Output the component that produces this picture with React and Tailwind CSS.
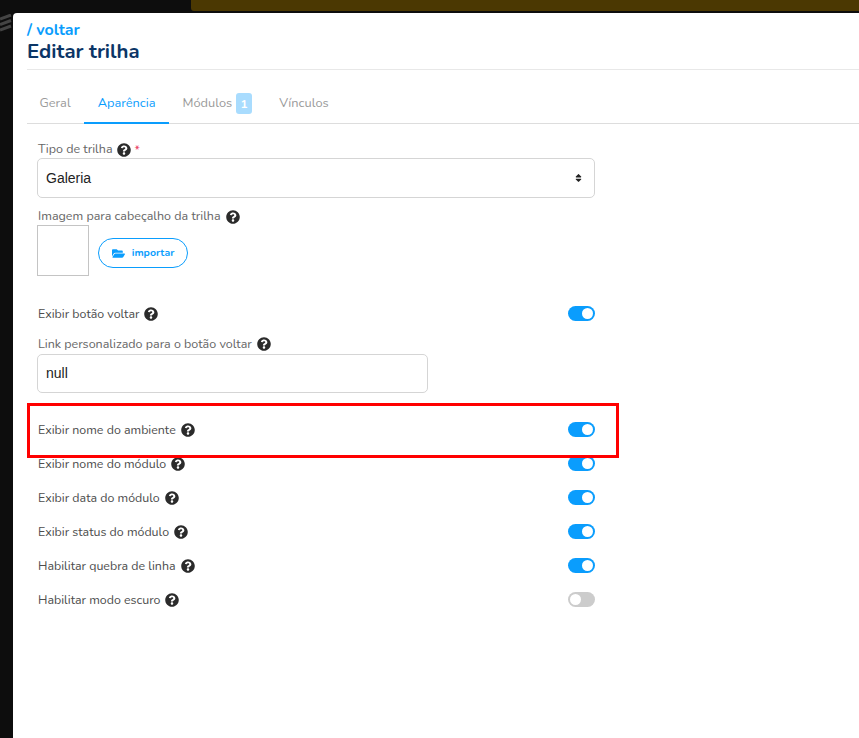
import { FaQuestionCircle, FaFolderOpen, FaSort } from 'react-icons/fa'

const font = "font-['Nunito','Lato','Noto_Sans',sans-serif]"

function Help({ className = '' }) {
  return <FaQuestionCircle className={`inline-block shrink-0 w-[14px] h-[14px] text-[#2b2b2b] ${className}`} />
}

function Toggle({ on = true }) {
  return (
    <span className={`w-[27px] h-[15px] rounded-full p-[2px] flex ${on ? 'bg-[#0a9dfd] justify-end' : 'bg-[#cccccc] justify-start'}`}>
      <span className="w-[11px] h-[11px] rounded-full bg-white" />
    </span>
  )
}

function ToggleRow({ label, on = true, className = 'h-[34px]' }) {
  return (
    <div className={`flex items-center justify-between w-[558px] ${className}`}>
      <span className="flex items-center gap-[5px] pl-px pt-[2px] text-[12.4px] text-[#4d4d4d]">
        {label}
        <Help />
      </span>
      <Toggle on={on} />
    </div>
  )
}

function Tab({ children, active, className = 'pl-[13.5px]' }) {
  return (
    <div className={`h-[41px] pr-[13.5px] pt-[2px] flex items-center gap-[4px] text-[12.8px] -mb-px border-b-2 ${className} ${active ? 'text-[#0a9dfd] border-[#0a9dfd]' : 'text-[#9a9a9a] border-transparent'}`}>
      {children}
    </div>
  )
}

export default function App() {
  return (
    <div className={`relative h-[738px] overflow-hidden bg-[#0d0d0d] flex flex-col ${font}`}>
      {/* fundo atras do modal */}
      <div className="h-[13px] shrink-0 pl-[191px]">
        <div className="h-[11px] bg-[#4b3802] rounded-bl-[3px]" />
      </div>
      <svg className="absolute left-0 top-[14px]" width="13" height="18" viewBox="0 0 13 18">
        <path d="M0 5 L11 1 M0 10.5 L11 6.5 M0 16 L11 12" stroke="#444444" strokeWidth="3" fill="none" />
      </svg>

      <div className="flex-1 ml-[13px] bg-white rounded-tl-[4px] pl-[14px]">
        {/* Header */}
        <div className="h-[57px] border-b border-[#e8e8e8] pt-[8px]">
          <div className="text-[16px] leading-[18px] font-bold text-[#0a9dfd]">/ voltar</div>
          <h1 className="text-[20.4px] leading-[24px] font-bold text-[#0b3566]">Editar trilha</h1>
        </div>

        {/* Tabs */}
        <div className="flex h-[54px] items-end border-b border-[#dddddd]">
          <Tab className="pl-[12.5px]">Geral</Tab>
          <Tab active>Aparência</Tab>
          <Tab>
            Módulos
            <span className="w-[16px] h-[21px] rounded-[3px] bg-[#a9dcfe] text-white text-[12px] font-bold flex items-center justify-center">1</span>
          </Tab>
          <Tab>Vínculos</Tab>
        </div>

        {/* Form */}
        <div className="pl-[10px] pt-[17px]">
          <label className="flex items-center gap-[4px] h-[17px] pl-px text-[12.5px] text-[#666666]">
            Tipo de trilha
            <Help className="w-[13px] h-[13px]" />
            <span className="text-[#e8335a] text-[12px]">*</span>
          </label>
          <div className="w-[558px] h-[40px] border border-[#d5d5d5] rounded-[5px] flex items-center justify-between pl-[8px] pr-[11px] font-['Liberation_Sans',sans-serif] text-[14px] text-[#222222]">
            Galeria
            <FaSort className="w-[9px] h-[10px] text-[#222222]" />
          </div>

          <label className="flex items-center gap-[5px] h-[17px] mt-[10px] pl-px text-[12.5px] text-[#666666]">
            Imagem para cabeçalho da trilha
            <Help className="w-[13px] h-[13px]" />
          </label>
          <div className="flex items-start gap-[9px]">
            <div className="w-[52px] h-[51px] border border-[#c4c4c4]" />
            <button className="w-[90px] h-[30px] mt-[13px] border border-[#0a9dfd] rounded-full flex items-center justify-center gap-[7px] text-[10.5px] font-bold text-[#0a9dfd]">
              <FaFolderOpen className="w-[13px] h-[13px]" />
              importar
            </button>
          </div>

          <ToggleRow label="Exibir botão voltar" className="h-[34px] mt-[20px]" />

          <label className="flex items-center gap-[5px] h-[17px] mt-[6px] pl-px pb-[1px] text-[12.5px] text-[#666666]">
            Link personalizado para o botão voltar
            <Help className="w-[13px] h-[13px]" />
          </label>
          <div className="mt-[1px] w-[391px] h-[39px] border border-[#d5d5d5] rounded-[5px] flex items-center pl-[8px] font-['Liberation_Sans',sans-serif] text-[14px] text-[#222222]">
            null
          </div>

          <ToggleRow label="Exibir nome do ambiente" className="h-[34px] mt-[19px]" />
          <ToggleRow label="Exibir nome do módulo" />
          <ToggleRow label="Exibir data do módulo" />
          <ToggleRow label="Exibir status do módulo" />
          <ToggleRow label="Habilitar quebra de linha" />
          <ToggleRow label="Habilitar modo escuro" on={false} />
        </div>
      </div>

      {/* marcacao vermelha do print */}
      <div className="absolute left-[27px] top-[403px] w-[592px] h-[55px] border-[3px] border-[#ff0000]" />
    </div>
  )
}
